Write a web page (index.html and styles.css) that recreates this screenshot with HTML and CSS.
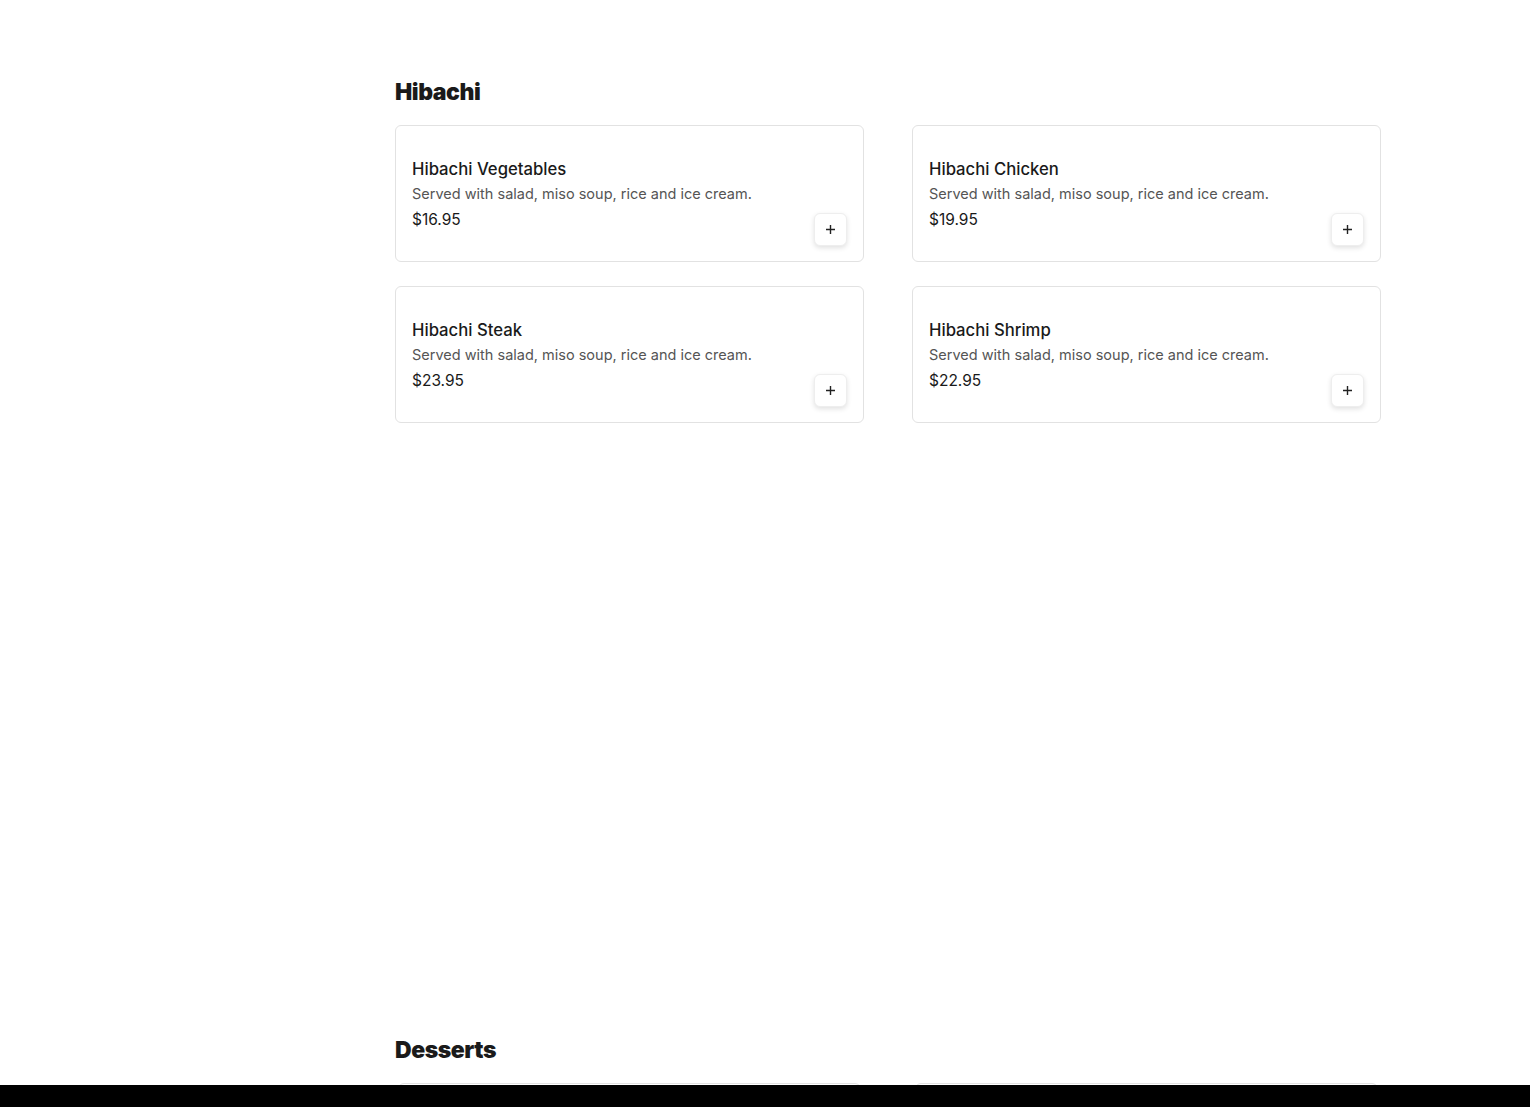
FILE: index.html
```html
<!DOCTYPE html>
<html lang="en">
<head>
    <meta charset="UTF-8">
    <meta name="viewport" content="width=device-width, initial-scale=1.0">
    <title>Menu</title>
    <link rel="stylesheet" href="styles.css">
</head>
<body>
    <div class="menu">
        <section class="category category-first">
            <h2>Hibachi</h2>
            <div class="item-grid">
                <div class="item-card">
                    <div class="item-info">
                        <div class="item-name">Hibachi Vegetables</div>
                        <div class="item-desc">Served with salad, miso soup, rice and ice cream.</div>
                        <div class="item-price">$16.95</div>
                    </div>
                    <button class="add-btn" aria-label="Add">
                        <svg width="11" height="11" viewBox="0 0 11 11"><path d="M5.5 1v9M1 5.5h9" stroke="#222" stroke-width="1.4"/></svg>
                    </button>
                </div>
                <div class="item-card">
                    <div class="item-info">
                        <div class="item-name">Hibachi Chicken</div>
                        <div class="item-desc">Served with salad, miso soup, rice and ice cream.</div>
                        <div class="item-price">$19.95</div>
                    </div>
                    <button class="add-btn" aria-label="Add">
                        <svg width="11" height="11" viewBox="0 0 11 11"><path d="M5.5 1v9M1 5.5h9" stroke="#222" stroke-width="1.4"/></svg>
                    </button>
                </div>
                <div class="item-card">
                    <div class="item-info">
                        <div class="item-name">Hibachi Steak</div>
                        <div class="item-desc">Served with salad, miso soup, rice and ice cream.</div>
                        <div class="item-price">$23.95</div>
                    </div>
                    <button class="add-btn" aria-label="Add">
                        <svg width="11" height="11" viewBox="0 0 11 11"><path d="M5.5 1v9M1 5.5h9" stroke="#222" stroke-width="1.4"/></svg>
                    </button>
                </div>
                <div class="item-card">
                    <div class="item-info">
                        <div class="item-name">Hibachi Shrimp</div>
                        <div class="item-desc">Served with salad, miso soup, rice and ice cream.</div>
                        <div class="item-price">$22.95</div>
                    </div>
                    <button class="add-btn" aria-label="Add">
                        <svg width="11" height="11" viewBox="0 0 11 11"><path d="M5.5 1v9M1 5.5h9" stroke="#222" stroke-width="1.4"/></svg>
                    </button>
                </div>
            </div>
        </section>

        <section class="category">
            <h2>Desserts</h2>
            <div class="item-grid">
                <div class="item-card item-card-hidden"></div>
                <div class="item-card item-card-hidden"></div>
            </div>
        </section>
    </div>

    <div class="cart-bar"></div>
</body>
</html>
```

FILE: styles.css
```css
body {
    font-family: Inter, "Open Sans", sans-serif;
    margin: 0;
    color: #1a1a1a;
    background: #fff;
}

.menu {
    width: 986px;
    margin: 0 auto 0 395px;
    padding-top: 74px;
}

.category {
    margin-bottom: 40px;
}

.category-first {
    min-height: 918px;
}

.category h2 {
    font-size: 23px;
    font-weight: 900;
    line-height: 36px;
    margin: 0 0 15px;
    letter-spacing: -0.45px;
}

.item-grid {
    display: grid;
    grid-template-columns: 1fr 1fr;
    column-gap: 48px;
    row-gap: 24px;
}

.item-card {
    display: flex;
    justify-content: space-between;
    align-items: center;
    height: 137px;
    box-sizing: border-box;
    padding: 16px 16px 15px;
    border: 1px solid #e2e2e2;
    border-radius: 6px;
}

.item-card-hidden {
    margin: 0 3px;
}

.item-name {
    font-size: 16.7px;
    font-weight: 500;
    line-height: 24px;
}

.item-desc {
    font-size: 14.5px;
    color: #555;
    line-height: 26px;
}

.item-price {
    font-size: 15.5px;
    line-height: 24px;
    margin-top: 1px;
}

.add-btn {
    align-self: flex-end;
    width: 33px;
    height: 33px;
    padding: 0;
    display: flex;
    align-items: center;
    justify-content: center;
    background: #fff;
    border: 1px solid #eee;
    border-radius: 6px;
    box-shadow: 0 2px 5px rgba(0, 0, 0, 0.12);
    cursor: pointer;
}

.cart-bar {
    position: fixed;
    left: 0;
    right: 0;
    bottom: 0;
    height: 22px;
    background: #000;
}
```
